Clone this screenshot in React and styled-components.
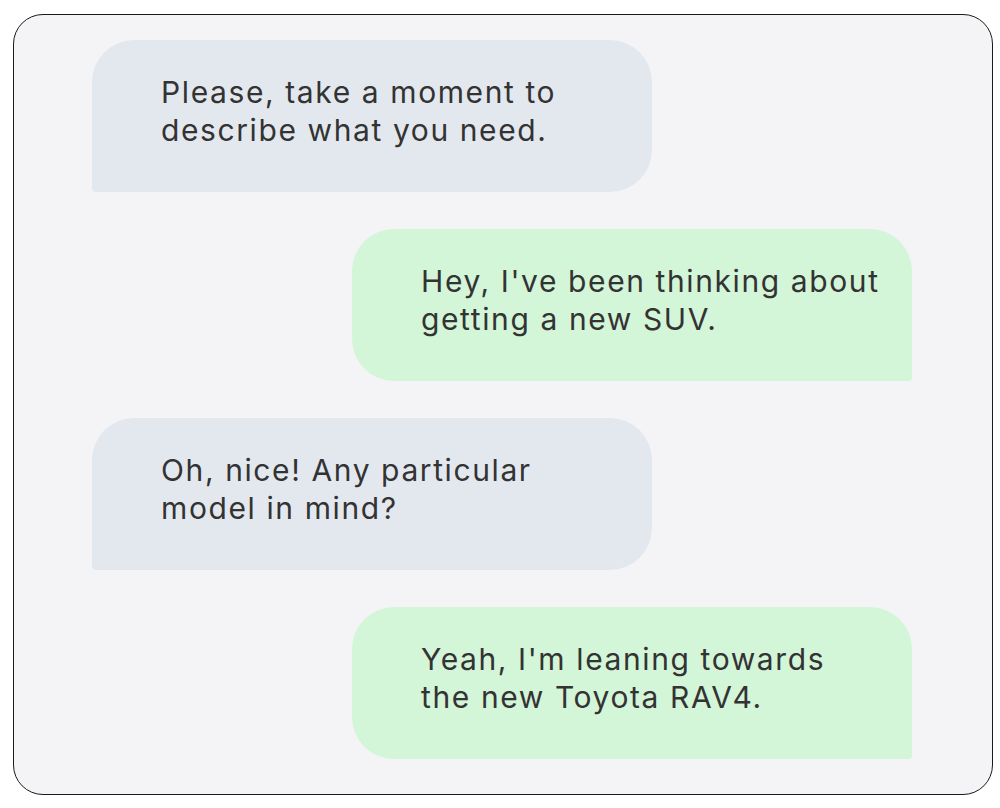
import React from "react";
import styled, { createGlobalStyle } from "styled-components";

const GlobalStyle = createGlobalStyle`
  html, body {
    margin: 0;
    padding: 0;
    background: #ffffff;
  }
  body {
    font-family: Inter, "Liberation Sans", sans-serif;
  }
`;

const Page = styled.div`
  width: 1000px;
  height: 808px;
  padding: 14px 7px 0 13px;
  box-sizing: border-box;
`;

const Card = styled.div`
  height: 781px;
  box-sizing: border-box;
  border: 1px solid #1a1a1a;
  border-radius: 30px;
  background: #f4f4f6;
  padding: 25px 80px 0 78px;
  display: flex;
  flex-direction: column;
  gap: 37px;
`;

const Row = styled.div`
  display: flex;
  justify-content: ${(p) => (p.$mine ? "flex-end" : "flex-start")};
`;

const Bubble = styled.div`
  width: 560px;
  height: 152px;
  box-sizing: border-box;
  padding: 0 20px 10px 69px;
  display: flex;
  align-items: center;
  background: ${(p) => (p.$mine ? "#d3f5d8" : "#e3e8ef")};
  border-radius: ${(p) => (p.$mine ? "42px 42px 4px 42px" : "42px 42px 42px 4px")};
  color: #333333;
  font-size: 30px;
  font-weight: 400;
  line-height: 38px;
  letter-spacing: 1.6px;
  white-space: nowrap;
`;

const messages = [
  { id: 1, mine: false, lines: ["Please, take a moment to", "describe what you need."] },
  { id: 2, mine: true, lines: ["Hey, I've been thinking about", "getting a new SUV."] },
  { id: 3, mine: false, lines: ["Oh, nice! Any particular", "model in mind?"] },
  { id: 4, mine: true, lines: ["Yeah, I'm leaning towards", "the new Toyota RAV4."] },
];

export default function App() {
  return (
    <Page>
      <GlobalStyle />
      <Card>
        {messages.map((m) => (
          <Row key={m.id} $mine={m.mine}>
            <Bubble $mine={m.mine}>
              <div>
                {m.lines[0]}
                <br />
                {m.lines[1]}
              </div>
            </Bubble>
          </Row>
        ))}
      </Card>
    </Page>
  );
}
